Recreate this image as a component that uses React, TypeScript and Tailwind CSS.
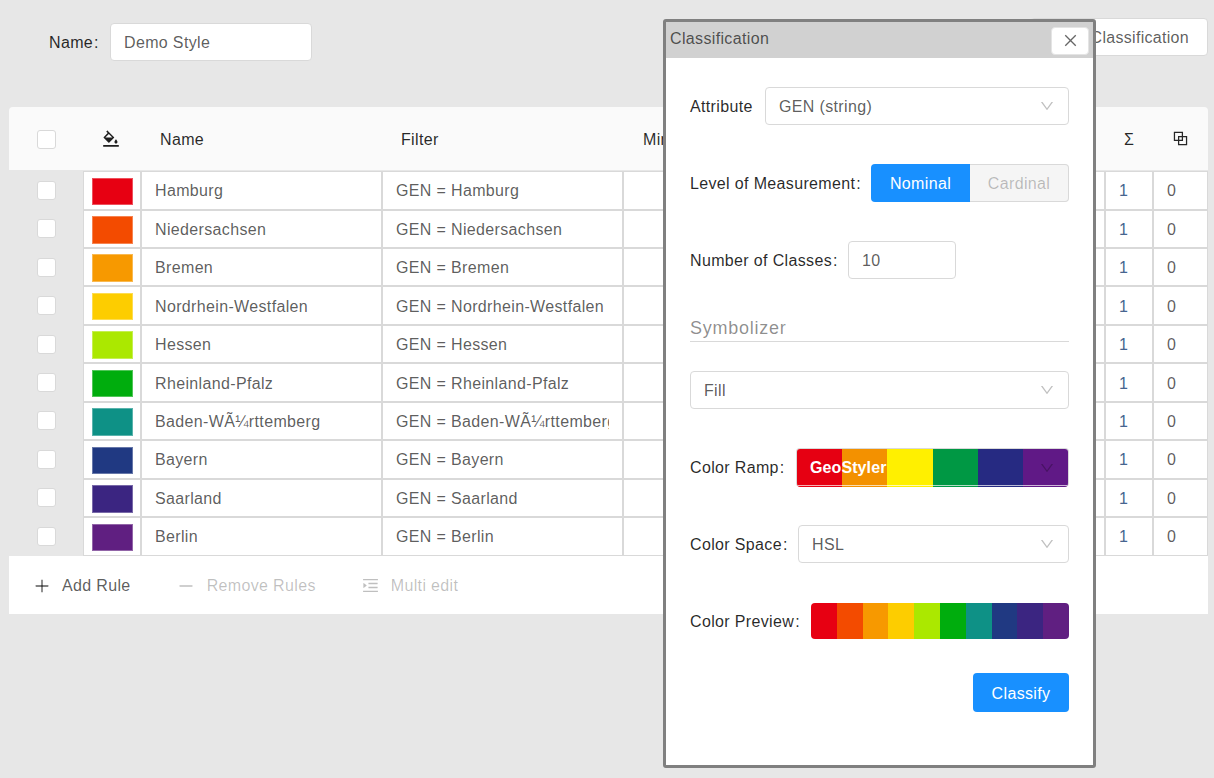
import React from "react";
import { AiOutlineBgColors, AiOutlineBlock, AiOutlinePlus, AiOutlineMinus, AiOutlineMenuUnfold, AiOutlineDown, AiOutlineClose } from "react-icons/ai";

const rows: [string, string, string][] = [
  ["Hamburg", "GEN = Hamburg", "#e70012"],
  ["Niedersachsen", "GEN = Niedersachsen", "#f34b00"],
  ["Bremen", "GEN = Bremen", "#f79900"],
  ["Nordrhein-Westfalen", "GEN = Nordrhein-Westfalen", "#fdcd00"],
  ["Hessen", "GEN = Hessen", "#abe800"],
  ["Rheinland-Pfalz", "GEN = Rheinland-Pfalz", "#00ad0d"],
  ["Baden-WÃ¼rttemberg", "GEN = Baden-WÃ¼rttemberg", "#0e9186"],
  ["Bayern", "GEN = Bayern", "#203982"],
  ["Saarland", "GEN = Saarland", "#3b2581"],
  ["Berlin", "GEN = Berlin", "#601f81"],
];
const preview = ["#e70012", "#f34b00", "#f79900", "#fdcd00", "#abe800", "#00ad0d", "#0e9186", "#203982", "#3b2581", "#601f81"];
const ramp = ["#e60012", "#f39100", "#fff000", "#009844", "#262a82", "#601986"];

const Check = () => <span className="block w-[19px] h-[19px] bg-white border border-[#d9d9d9] rounded-[3px]" />;

const Cell = ({ className, children }: { className: string; children?: React.ReactNode }) => (
  <div className={`shrink-0 h-full pt-[2px] bg-white border border-[#d9d9d9] whitespace-nowrap flex items-center ${className}`}>{children}</div>
);

const Select = ({ value, className }: { value: string; className: string }) => (
  <div className={`h-[38px] pt-[2px] bg-white border border-[#d9d9d9] rounded-[4px] flex items-center justify-between pl-[13px] pr-[13px] text-[#000000a6] ${className}`}>
    <span>{value}</span>
    <AiOutlineDown className="text-[16px] text-[#00000040] -mt-[2px]" />
  </div>
);

const Label = ({ text, colon = true, className = "" }: { text: string; colon?: boolean; className?: string }) => (
  <label className={`shrink-0 text-[#000000d9] whitespace-nowrap flex items-center ${className}`}>
    {text}
    {colon && <span className="ml-[1px]">:</span>}
  </label>
);

export default function App() {
  return (
    <div className="relative w-[1214px] h-[778px] overflow-hidden bg-[#e7e7e7] text-[16px] leading-[24px] tracking-[0.35px] text-[#000000a6] font-['Liberation_Sans',Arial,sans-serif]">
      <div className="flex items-start justify-between h-[107px] pl-[49px] pr-[6px] pt-[18px]">
        <div className="flex items-center mt-[5px]">
          <Label text="Name" className="w-[61px] pt-[2px]" />
          <div className="w-[202px] h-[38px] pt-[2px] bg-white border border-[#d9d9d9] rounded-[4px] flex items-center pl-[13px]">Demo Style</div>
        </div>
        <div className="h-[38px] pt-[2px] bg-white border border-[#d9d9d9] rounded-[4px] flex items-center pl-[60px] pr-[18px] tracking-[0.3px]">Classification</div>
      </div>

      <div className="ml-[9px] w-[1199px]">
        <div className="h-[63px] pt-[2px] bg-[#fafafa] rounded-t-[4px] flex items-center text-[#000000d9]">
          <div className="w-[74px] flex pl-[28px]"><Check /></div>
          <div className="w-[58px] flex pl-[18px]"><AiOutlineBgColors className="text-[20px] text-[#000000e0] -mt-[2px]" /></div>
          <div className="w-[241px] pl-[19px]">Name</div>
          <div className="w-[241px] pl-[19px]">Filter</div>
          <div className="w-[482px] pl-[20px]">Min Scale</div>
          <div className="w-[48px] pl-[19px]">Σ</div>
          <div className="w-[55px] flex justify-center"><AiOutlineBlock className="text-[19px] text-[#000000d9] -mt-[3px]" /></div>
        </div>
        <div className="pt-[1.15px]">
          {rows.map(([name, filter, color]) => (
            <div key={name} className="flex h-[38.44px]">
              <div className="w-[74px] shrink-0 flex items-center pl-[28px]"><Check /></div>
              <Cell className="w-[58px] pl-[8px]">
                <span className="block w-[41px] h-[27.5px] border border-[#ffffff50]" style={{ backgroundColor: color }} />
              </Cell>
              <Cell className="w-[241px] px-[13px]"><span className="block overflow-hidden">{name}</span></Cell>
              <Cell className="w-[241px] px-[13px]"><span className="block overflow-hidden">{filter}</span></Cell>
              <Cell className="w-[482px]" />
              <Cell className="w-[48px] pl-[13px] text-[#46658f]">1</Cell>
              <Cell className="w-[55px] pl-[13px]">0</Cell>
            </div>
          ))}
        </div>
        <div className="h-[58.85px] pt-[2px] bg-white flex items-center pl-[24px]">
          <AiOutlinePlus className="text-[18px] text-[#000000a6]" />
          <span className="ml-[11px]">Add Rule</span>
          <AiOutlineMinus className="ml-[46px] text-[18px] text-[#00000040]" />
          <span className="ml-[12px] text-[#00000040]">Remove Rules</span>
          <AiOutlineMenuUnfold className="ml-[45px] text-[19px] text-[#00000040]" />
          <span className="ml-[11px] text-[#00000040]">Multi edit</span>
        </div>
      </div>

      <div className="absolute left-[663px] top-[19px] w-[433px] h-[749px] bg-white border-[3px] border-[#808080] rounded-[3px] flex flex-col">
        <div className="h-[36px] shrink-0 bg-[#d1d1d1] flex items-center justify-between pl-[4px] pr-[4px]">
          <span className="text-[#000000a6] -mt-[2px]">Classification</span>
          <div className="w-[38px] h-[28px] mt-[1px] bg-white rounded-[4px] border border-[#e4e4e4] flex items-center justify-center">
            <AiOutlineClose className="text-[17px] text-[#00000099] -mt-[1px]" />
          </div>
        </div>
        <div className="pl-[24px] pr-[24px] pt-[29px] flex flex-col flex-1">
          <div className="flex items-center h-[38px]">
            <Label text="Attribute" colon={false} className="w-[75px] pt-[2px]" />
            <Select value="GEN (string)" className="flex-1" />
          </div>
          <div className="flex items-center h-[38px] mt-[39px]">
            <Label text="Level of Measurement" className="w-[181px] pt-[2px]" />
            <div className="flex-1 flex h-[38px]">
              <div className="w-[99px] pt-[2px] bg-[#1890ff] text-white rounded-l-[4px] flex items-center justify-center">Nominal</div>
              <div className="w-[99px] pt-[2px] bg-[#f5f5f5] text-[#00000040] border border-[#d9d9d9] border-l-0 rounded-r-[4px] flex items-center justify-center">Cardinal</div>
            </div>
          </div>
          <div className="flex items-center h-[38px] mt-[39px]">
            <Label text="Number of Classes" className="w-[158px] pt-[2px]" />
            <div className="w-[108px] h-[38px] pt-[2px] bg-white border border-[#d9d9d9] rounded-[4px] flex items-center pl-[13px]">10</div>
          </div>
          <div className="mt-[36px] h-[27px] border-b border-[#d9d9d9] text-[18px] leading-[26px] text-[#00000073] tracking-[0.75px]">Symbolizer</div>
          <Select value="Fill" className="mt-[29px]" />
          <div className="flex items-center h-[39px] mt-[39px]">
            <Label text="Color Ramp" className="w-[106px]" />
            <div className="relative flex-1 h-[39px] rounded-[4px] overflow-hidden flex border border-[#d9d9d9] border-b-0">
              {ramp.map((c) => <div key={c} className="flex-1" style={{ backgroundColor: c }} />)}
              <div className="absolute inset-0 flex items-center justify-between pl-[13px] pr-[13px]">
                <span className="text-white font-bold tracking-[0.1px]">GeoStyler</span>
                <AiOutlineDown className="text-[16px] text-[#00000040]" />
              </div>
              <div className="absolute left-0 right-0 bottom-[1px] h-px bg-[#ffffffb0]" />
            </div>
          </div>
          <div className="flex items-center h-[38px] mt-[38px]">
            <Label text="Color Space" className="w-[108px] pt-[2px]" />
            <Select value="HSL" className="flex-1" />
          </div>
          <div className="flex items-center h-[36px] mt-[40px]">
            <Label text="Color Preview" className="w-[121px] pt-[2px]" />
            <div className="flex-1 h-[36px] rounded-[4px] overflow-hidden flex">
              {preview.map((c) => <div key={c} className="flex-1" style={{ backgroundColor: c }} />)}
            </div>
          </div>
          <div className="flex justify-end mt-[34px]">
            <div className="w-[96px] h-[39px] pt-[2px] bg-[#1890ff] text-white rounded-[4px] flex items-center justify-center">Classify</div>
          </div>
        </div>
      </div>
    </div>
  );
}
